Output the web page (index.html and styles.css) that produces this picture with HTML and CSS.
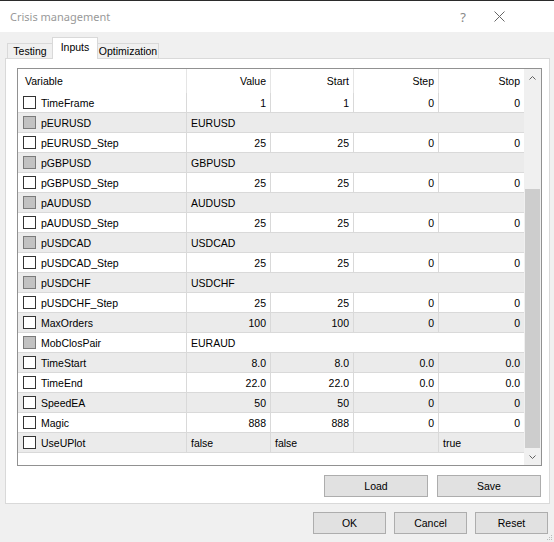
FILE: index.html
```html
<!DOCTYPE html>
<html lang="en">
<head>
    <meta charset="UTF-8">
    <title>Crisis management</title>
    <link rel="stylesheet" href="styles.css">
</head>
<body>
    <div class="window">
        <div class="titlebar">
            <span class="title">Crisis management</span>
            <span class="help">?</span>
            <svg class="close" width="11" height="11" viewBox="0 0 11 11">
                <path d="M0.5 0.5 L10.5 10.5 M10.5 0.5 L0.5 10.5" stroke="#666" stroke-width="1" fill="none"/>
            </svg>
        </div>
        <div class="tabs">
            <div class="tab tab-first">Testing</div>
            <div class="tab active">Inputs</div>
            <div class="tab tab-last">Optimization</div>
        </div>
        <div class="panel">
            <div class="list">
                <div class="grid">
                    <div class="row head">
                        <div class="cell">Variable</div>
                        <div class="cell num">Value</div>
                        <div class="cell num">Start</div>
                        <div class="cell num">Step</div>
                        <div class="cell num">Stop</div>
                    </div>
                    <div class="rows">
                        <div class="row"><div class="cell name"><span class="check"></span>TimeFrame</div><div class="cell num">1</div><div class="cell num">1</div><div class="cell num">0</div><div class="cell num">0</div></div>
                        <div class="row"><div class="cell name"><span class="check off"></span>pEURUSD</div><div class="cell wide">EURUSD</div></div>
                        <div class="row"><div class="cell name"><span class="check"></span>pEURUSD_Step</div><div class="cell num">25</div><div class="cell num">25</div><div class="cell num">0</div><div class="cell num">0</div></div>
                        <div class="row"><div class="cell name"><span class="check off"></span>pGBPUSD</div><div class="cell wide">GBPUSD</div></div>
                        <div class="row"><div class="cell name"><span class="check"></span>pGBPUSD_Step</div><div class="cell num">25</div><div class="cell num">25</div><div class="cell num">0</div><div class="cell num">0</div></div>
                        <div class="row"><div class="cell name"><span class="check off"></span>pAUDUSD</div><div class="cell wide">AUDUSD</div></div>
                        <div class="row"><div class="cell name"><span class="check"></span>pAUDUSD_Step</div><div class="cell num">25</div><div class="cell num">25</div><div class="cell num">0</div><div class="cell num">0</div></div>
                        <div class="row"><div class="cell name"><span class="check off"></span>pUSDCAD</div><div class="cell wide">USDCAD</div></div>
                        <div class="row"><div class="cell name"><span class="check"></span>pUSDCAD_Step</div><div class="cell num">25</div><div class="cell num">25</div><div class="cell num">0</div><div class="cell num">0</div></div>
                        <div class="row"><div class="cell name"><span class="check off"></span>pUSDCHF</div><div class="cell wide">USDCHF</div></div>
                        <div class="row"><div class="cell name"><span class="check"></span>pUSDCHF_Step</div><div class="cell num">25</div><div class="cell num">25</div><div class="cell num">0</div><div class="cell num">0</div></div>
                        <div class="row"><div class="cell name"><span class="check"></span>MaxOrders</div><div class="cell num">100</div><div class="cell num">100</div><div class="cell num">0</div><div class="cell num">0</div></div>
                        <div class="row"><div class="cell name"><span class="check off"></span>MobClosPair</div><div class="cell wide">EURAUD</div></div>
                        <div class="row"><div class="cell name"><span class="check"></span>TimeStart</div><div class="cell num">8.0</div><div class="cell num">8.0</div><div class="cell num">0.0</div><div class="cell num">0.0</div></div>
                        <div class="row"><div class="cell name"><span class="check"></span>TimeEnd</div><div class="cell num">22.0</div><div class="cell num">22.0</div><div class="cell num">0.0</div><div class="cell num">0.0</div></div>
                        <div class="row"><div class="cell name"><span class="check"></span>SpeedEA</div><div class="cell num">50</div><div class="cell num">50</div><div class="cell num">0</div><div class="cell num">0</div></div>
                        <div class="row"><div class="cell name"><span class="check"></span>Magic</div><div class="cell num">888</div><div class="cell num">888</div><div class="cell num">0</div><div class="cell num">0</div></div>
                        <div class="row"><div class="cell name"><span class="check"></span>UseUPlot</div><div class="cell">false</div><div class="cell">false</div><div class="cell"></div><div class="cell">true</div></div>
                    </div>
                </div>
                <div class="scrollbar">
                    <div class="arrow">
                        <svg width="7" height="4" viewBox="0 0 7 4"><path d="M0.5 3.5 L3.5 0.5 L6.5 3.5" stroke="#606060" fill="none"/></svg>
                    </div>
                    <div class="track"><div class="thumb"></div></div>
                    <div class="arrow">
                        <svg width="7" height="4" viewBox="0 0 7 4"><path d="M0.5 0.5 L3.5 3.5 L6.5 0.5" stroke="#606060" fill="none"/></svg>
                    </div>
                </div>
            </div>
            <div class="panel-buttons">
                <button class="btn wide-btn">Load</button>
                <button class="btn wide-btn">Save</button>
            </div>
        </div>
        <div class="footer">
            <button class="btn">OK</button>
            <button class="btn">Cancel</button>
            <button class="btn">Reset</button>
        </div>
        <svg class="grip" width="6" height="6" viewBox="0 0 6 6">
            <rect x="4" y="0" width="1" height="1" fill="#bbb"/>
            <rect x="2" y="2" width="1" height="1" fill="#bbb"/>
            <rect x="4" y="2" width="1" height="1" fill="#bbb"/>
            <rect x="0" y="4" width="1" height="1" fill="#bbb"/>
            <rect x="2" y="4" width="1" height="1" fill="#bbb"/>
            <rect x="4" y="4" width="1" height="1" fill="#bbb"/>
        </svg>
    </div>
</body>
</html>
```

FILE: styles.css
```css
body {
    margin: 0;
    padding: 0;
    font-family: "Liberation Sans", Arial, sans-serif;
    font-size: 10.5px;
    color: #000;
}
.window {
    position: relative;
    width: 554px;
    height: 542px;
    box-sizing: border-box;
    border-top: 1px solid #2b2b2b;
    background: #f0f0f0;
    display: flex;
    flex-direction: column;
    overflow: hidden;
}
.titlebar {
    height: 31px;
    background: #fff;
    display: flex;
    align-items: center;
    padding-left: 10px;
    padding-right: 46px;
    color: #999;
    font-family: "Noto Sans", sans-serif;
    font-size: 11px;
}
.title {
    flex: 1;
}
.help {
    width: 14px;
    text-align: center;
    margin-right: 24px;
    font-size: 13px;
    color: #888;
}
.close {
    margin-right: 3px;
}
.tabs {
    height: 26px;
    display: flex;
    align-items: flex-end;
    padding-left: 7px;
}
.tab {
    box-sizing: border-box;
    height: 15px;
    display: flex;
    align-items: center;
    justify-content: center;
    border-top: 1px solid #d9d9d9;
    background: #f0f0f0;
}
.tab-first {
    width: 45px;
    border-left: 1px solid #d9d9d9;
}
.tab-last {
    width: 61px;
    border-right: 1px solid #d9d9d9;
}
.tab.active {
    position: relative;
    z-index: 1;
    width: 46px;
    height: 22px;
    margin-bottom: -1px;
    padding-bottom: 3px;
    border: 1px solid #d9d9d9;
    border-bottom: none;
    background: #fff;
}
.panel {
    margin-left: 5px;
    margin-right: 4px;
    height: 446px;
    box-sizing: border-box;
    border: 1px solid #d9d9d9;
    background: #fff;
    padding: 9px 7px 6px 11px;
    display: flex;
    flex-direction: column;
}
.list {
    height: 398px;
    box-sizing: border-box;
    border: 1px solid #919191;
    display: flex;
}
.grid {
    flex: 1;
}
.row {
    display: grid;
    grid-template-columns: 169px 84px 83px 85px 1fr;
    height: 20px;
    box-sizing: border-box;
    border-bottom: 1px solid #d9d9d9;
}
.rows .row:nth-child(even) {
    background: #ebebeb;
}
.row.head {
    height: 24px;
    border-bottom: none;
}
.cell {
    box-sizing: border-box;
    display: flex;
    align-items: center;
    padding: 0 4px;
    border-right: 1px solid #d9d9d9;
    white-space: nowrap;
    overflow: hidden;
}
.row .cell:last-child {
    border-right: none;
}
.head .cell {
    border-right-color: #e5e5e5;
    padding-left: 7px;
}
.cell.num {
    justify-content: flex-end;
}
.cell.name {
    padding-left: 5px;
}
.cell.wide {
    grid-column: span 4;
}
.check {
    width: 13px;
    height: 13px;
    box-sizing: border-box;
    border: 1px solid #333;
    background: #fff;
    margin-right: 5px;
    flex-shrink: 0;
}
.check.off {
    border-color: #7a7a7a;
    background: #c2c2c2;
}
.scrollbar {
    width: 17px;
    background: #f0f0f0;
    display: flex;
    flex-direction: column;
}
.arrow {
    height: 17px;
    display: flex;
    align-items: center;
    justify-content: center;
}
.track {
    flex: 1;
    padding: 0 1px;
    display: flex;
    flex-direction: column;
    justify-content: flex-end;
}
.thumb {
    height: 259px;
    background: #cdcdcd;
}
.panel-buttons {
    display: flex;
    justify-content: flex-end;
    gap: 9px;
    margin-top: 9px;
    padding-right: 1px;
}
.btn {
    width: 73px;
    height: 22px;
    box-sizing: border-box;
    border: 1px solid #adadad;
    background: #e1e1e1;
    font-family: "Liberation Sans", Arial, sans-serif;
    font-size: 10.5px;
    color: #000;
    padding: 0;
}
.btn.wide-btn {
    width: 104px;
}
.footer {
    display: flex;
    justify-content: flex-end;
    gap: 8px;
    margin-top: 8px;
    padding-right: 6px;
}
.grip {
    position: absolute;
    right: 1px;
    bottom: 1px;
}
```
